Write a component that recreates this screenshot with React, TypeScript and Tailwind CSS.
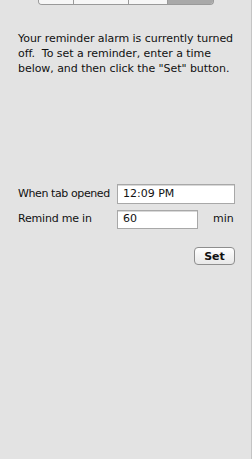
export default function App() {
  const tabs = ["Nav", "Symbols", "Stats", "Alarm"];
  const widths = ["w-[34px]", "w-[55px]", "w-[39px]", "w-[46px]"];
  return (
    <div className="h-[459px] w-[252px] bg-[#e3e3e3] border-r border-[#c4c4c4] font-['DejaVu_Sans',sans-serif] text-[#111] overflow-hidden">
      <div className="flex pl-[38px]">
        <div className="flex h-[5px] rounded-b-[4px] border border-t-0 border-[#9a9a9a] overflow-hidden">
          {tabs.map((t, i) => (
            <div
              key={t}
              className={`${widths[i]} ${i === 3 ? "bg-[#a9a9a9]" : "bg-[#f7f7f7]"} ${
                i > 0 ? "border-l border-[#9a9a9a]" : ""
              }`}
            />
          ))}
        </div>
      </div>
      <p className="mt-[26px] pl-[18px] pr-[14px] text-[11px] leading-[15px] tracking-[-0.05px]">
        Your reminder alarm is currently turned off.&nbsp; To set a reminder, enter a time below, and then click the "Set" button.
      </p>
      <div className="mt-[108px] pl-[18px] flex flex-col">
        <div className="flex items-center h-[20px]">
          <span className="w-[99px] text-[11px] tracking-[-0.4px]">When tab opened</span>
          <div className="w-[118px] h-[20px] bg-white border border-[#a8a8a8] shadow-[inset_0_1px_0_#d8d8d8] pl-[5px] text-[11px] leading-[18px]">
            12:09 PM
          </div>
        </div>
        <div className="flex items-center h-[19px] mt-[6px]">
          <span className="w-[99px] text-[11px] tracking-[-0.2px]">Remind me in</span>
          <div className="w-[81px] h-[19px] bg-white border border-[#a8a8a8] shadow-[inset_0_1px_0_#d8d8d8] pl-[5px] text-[11px] leading-[15px]">
            60
          </div>
          <span className="ml-[15px] text-[11px]">min</span>
        </div>
        <div className="flex justify-end pr-[16px] mt-[18px]">
          <button className="w-[41px] h-[18px] rounded-[4px] border border-[#8e8e8e] bg-gradient-to-b from-[#ffffff] to-[#e8e8e8] text-[11px] leading-none font-semibold">
            Set
          </button>
        </div>
      </div>
    </div>
  );
}
